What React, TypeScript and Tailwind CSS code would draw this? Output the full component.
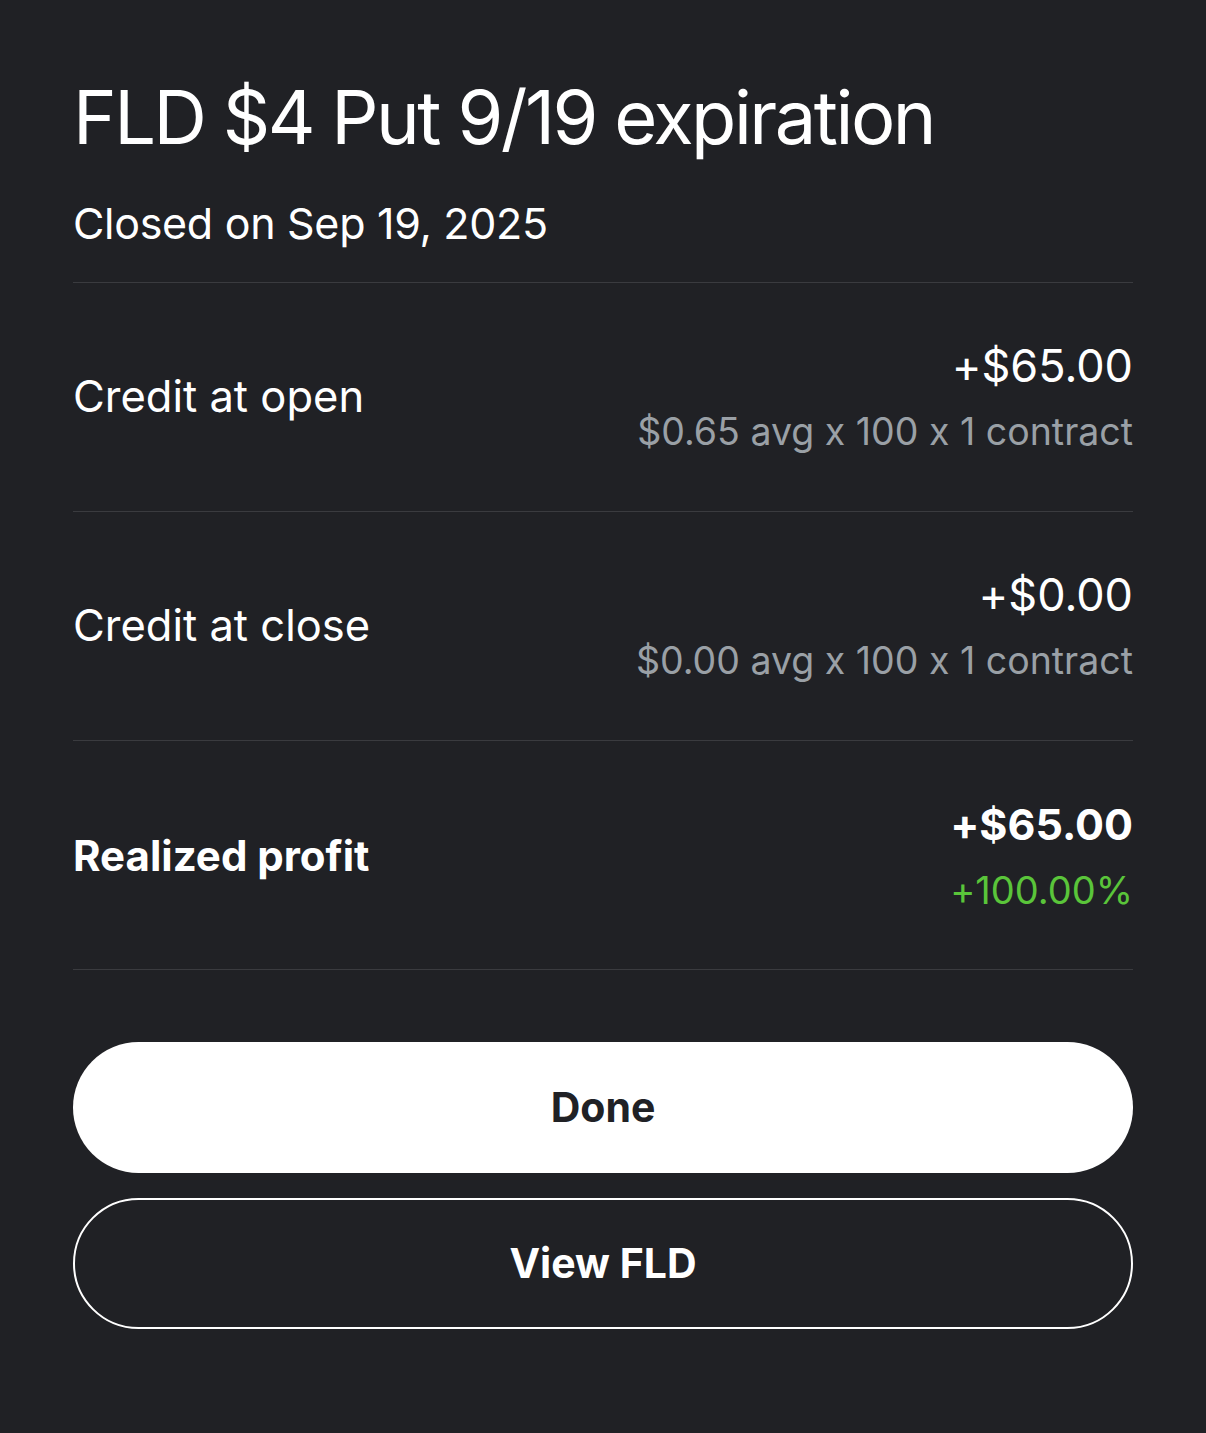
export default function App() {
  const rows = [
    { label: "Credit at open", value: "+$65.00", sub: "$0.65 avg x 100 x 1 contract", bold: false },
    { label: "Credit at close", value: "+$0.00", sub: "$0.00 avg x 100 x 1 contract", bold: false },
    { label: "Realized profit", value: "+$65.00", sub: "+100.00%", bold: true },
  ];

  return (
    <div
      className="min-h-[1433px] w-full bg-[#202125] px-[73px] pt-[72px] text-white [font-feature-settings:'calt'_0]"
      style={{ fontFamily: "Inter, 'Noto Sans', sans-serif" }}
    >
      <div className="border-b border-[#3a3b3f] pb-[31px]">
        <h1 className="text-[74px] leading-[90px] tracking-[-2.5px]">FLD $4 Put 9/19 expiration</h1>
        <p className="mt-[33px] text-[43px] leading-[56px] tracking-[-0.3px]">Closed on Sep 19, 2025</p>
      </div>

      {rows.map((r) => (
        <div key={r.label} className="flex h-[229px] items-center justify-between border-b border-[#3a3b3f]">
          <span className={r.bold ? "text-[42px] font-bold" : "text-[43.5px]"}>{r.label}</span>
          <div className="flex flex-col items-end gap-[13px]">
            <span className={r.bold ? "text-[43px] leading-[56px] font-bold" : "text-[45px] leading-[56px]"}>
              {r.value}
            </span>
            <span
              className={
                r.bold
                  ? "text-[38px] leading-[50px] text-[#5ac53a]"
                  : "text-[37.5px] leading-[50px] text-[#9aa0a6]"
              }
            >
              {r.sub}
            </span>
          </div>
        </div>
      ))}

      <div className="mt-[72px] flex flex-col gap-[25px]">
        <button className="h-[131px] w-full rounded-full bg-white text-[41px] font-bold text-[#202125]">
          Done
        </button>
        <button className="h-[131px] w-full rounded-full border-2 border-white text-[41px] font-bold text-white">
          View FLD
        </button>
      </div>
    </div>
  );
}
